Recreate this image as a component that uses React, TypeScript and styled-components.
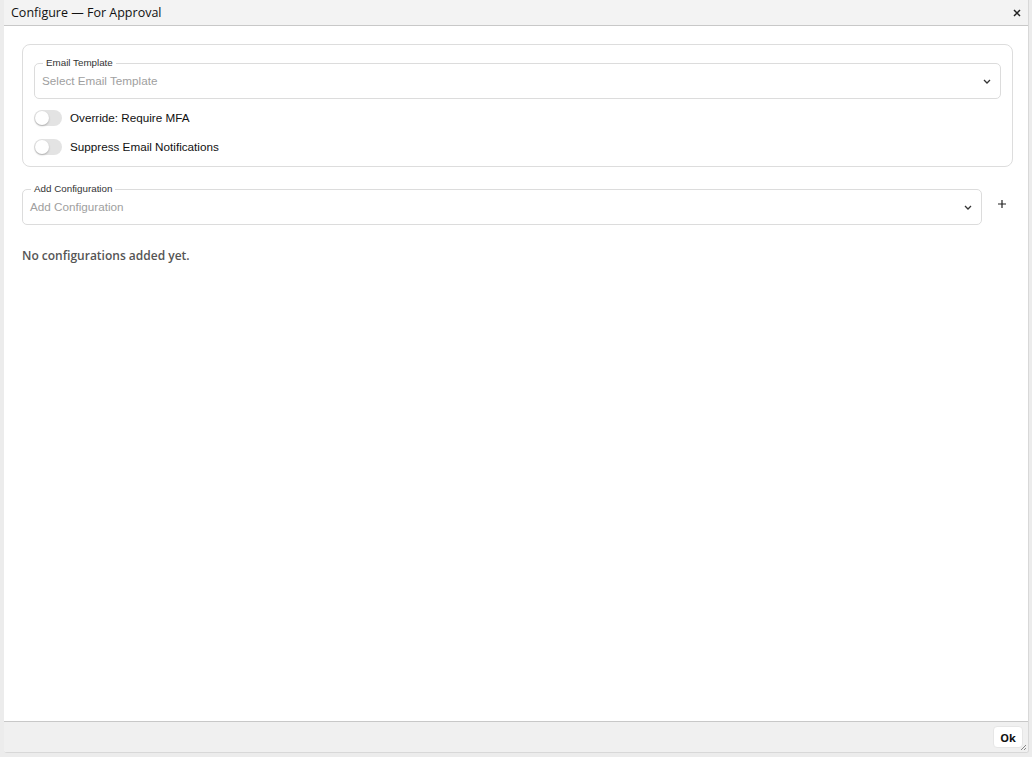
import styled, { createGlobalStyle } from 'styled-components'
import { useState } from 'react'

const GlobalStyle = createGlobalStyle`
  html, body {
    margin: 0;
    padding: 0;
    background: #ececec;
  }
  body {
    font-family: "Liberation Sans", Arial, sans-serif;
  }
`

const Page = styled.div`
  width: 1032px;
  height: 757px;
  padding: 0 3px 4px 4px;
  box-sizing: border-box;
  display: flex;
`

const Dialog = styled.div`
  flex: 1;
  display: flex;
  flex-direction: column;
  background: #ffffff;
  border-right: 1px solid #d8d8d8;
  border-bottom: 1px solid #d8d8d8;
  border-radius: 0 0 3px 3px;
  position: relative;
  overflow: hidden;
`

const TitleBar = styled.div`
  height: 25px;
  display: flex;
  align-items: center;
  justify-content: space-between;
  padding: 0 4px 0 7px;
  background: #f3f3f3;
  border-bottom: 1px solid #c8c8c8;
  font-family: "Open Sans", "Noto Sans", sans-serif;
  font-size: 12.5px;
  color: #111;
`

const CloseButton = styled.button`
  border: none;
  background: none;
  padding: 0;
  width: 14px;
  height: 14px;
  display: flex;
  align-items: center;
  justify-content: center;
  cursor: pointer;
  color: #222;
`

const Body = styled.div`
  flex: 1;
  padding: 18px 15px 0 18px;
  display: flex;
  flex-direction: column;
`

const Card = styled.div`
  border: 1px solid #dddddd;
  border-radius: 8px;
  padding: 18px 11px 5px 11px;
  display: flex;
  flex-direction: column;
`

const Field = styled.div`
  position: relative;
  border: 1px solid #dcdcdc;
  border-radius: 5px;
  height: 36px;
  box-sizing: border-box;
  padding: 0 9px 0 7px;
  display: flex;
  align-items: center;
  justify-content: space-between;
  flex: 1 1 auto;
  min-width: 0;
`

const Legend = styled.span`
  position: absolute;
  top: -7px;
  left: 8px;
  padding: 0 3px;
  background: #fff;
  font-size: 9.8px;
  line-height: 11px;
  color: #333;
`

const Placeholder = styled.span`
  font-size: 11.7px;
  color: #a0a0a0;
  margin-top: -2px;
`

const Chevron = styled.span`
  display: flex;
  color: #333;
`

const ToggleRow = styled.label`
  display: flex;
  align-items: center;
  gap: 8px;
  height: 29px;
  font-size: 11.7px;
  color: #111;
  cursor: pointer;
`

const Track = styled.span<{ $on: boolean }>`
  width: 28px;
  height: 16px;
  border-radius: 8px;
  background: ${(p) => (p.$on ? '#4a7bd0' : '#e3e3e3')};
  position: relative;
  flex-shrink: 0;
`

const Knob = styled.span<{ $on: boolean }>`
  position: absolute;
  top: 1px;
  left: ${(p) => (p.$on ? '13px' : '1px')};
  width: 14px;
  height: 14px;
  border-radius: 50%;
  background: #fff;
  box-shadow: 0 1px 2px rgba(0, 0, 0, 0.25);
`

const Toggles = styled.div`
  display: flex;
  flex-direction: column;
  margin-top: 4px;
`

const AddRow = styled.div`
  display: flex;
  align-items: center;
  margin-top: 22px;
  gap: 14px;
`

const PlusButton = styled.button`
  border: none;
  background: none;
  padding: 0;
  width: 12px;
  height: 12px;
  margin-top: -6px;
  margin-right: 5px;
  display: flex;
  cursor: pointer;
  color: #222;
`

const EmptyText = styled.div`
  margin-top: 22px;
  font-family: "Open Sans", "Noto Sans", sans-serif;
  font-size: 12px;
  font-weight: 600;
  color: #555;
`

const Footer = styled.div`
  height: 30px;
  background: #f0f0f0;
  border-top: 1px solid #c8c8c8;
  display: flex;
  align-items: center;
  justify-content: flex-end;
  padding: 0 5px;
`

const OkButton = styled.button`
  background: #fff;
  border: 1px solid #e6e6e6;
  border-radius: 4px;
  width: 30px;
  height: 22px;
  font-family: "Open Sans", "Noto Sans", sans-serif;
  font-size: 11px;
  font-weight: 700;
  color: #111;
  padding: 0;
  cursor: pointer;
`

const Grip = styled.svg`
  position: absolute;
  right: 1px;
  bottom: 1px;
`

function ChevronIcon() {
  return (
    <svg width="8" height="5" viewBox="0 0 8 5" fill="none">
      <path d="M1 1l3 3 3-3" stroke="currentColor" strokeWidth="1.3" />
    </svg>
  )
}

function Toggle({ label }: { label: string }) {
  const [on, setOn] = useState(false)
  return (
    <ToggleRow onClick={() => setOn(!on)}>
      <Track $on={on}>
        <Knob $on={on} />
      </Track>
      {label}
    </ToggleRow>
  )
}

export default function App() {
  return (
    <>
      <GlobalStyle />
      <Page>
        <Dialog>
          <TitleBar>
            Configure — For Approval
            <CloseButton aria-label="Close">
              <svg width="8" height="8" viewBox="0 0 8 8">
                <path d="M1 1l6 6M7 1l-6 6" stroke="currentColor" strokeWidth="1.5" />
              </svg>
            </CloseButton>
          </TitleBar>
          <Body>
            <Card>
              <Field>
                <Legend>Email Template</Legend>
                <Placeholder>Select Email Template</Placeholder>
                <Chevron>
                  <ChevronIcon />
                </Chevron>
              </Field>
              <Toggles>
                <Toggle label="Override: Require MFA" />
                <Toggle label="Suppress Email Notifications" />
              </Toggles>
            </Card>
            <AddRow>
              <Field>
                <Legend>Add Configuration</Legend>
                <Placeholder>Add Configuration</Placeholder>
                <Chevron>
                  <ChevronIcon />
                </Chevron>
              </Field>
              <PlusButton aria-label="Add">
                <svg width="12" height="12" viewBox="0 0 12 12">
                  <path d="M6 2v8M2 6h8" stroke="currentColor" strokeWidth="1.2" />
                </svg>
              </PlusButton>
            </AddRow>
            <EmptyText>No configurations added yet.</EmptyText>
          </Body>
          <Footer>
            <OkButton>Ok</OkButton>
          </Footer>
          <Grip width="7" height="7" viewBox="0 0 7 7">
            <path d="M6 1L1 6M6 4L4 6" stroke="#888" strokeWidth="1" />
          </Grip>
        </Dialog>
      </Page>
    </>
  )
}
